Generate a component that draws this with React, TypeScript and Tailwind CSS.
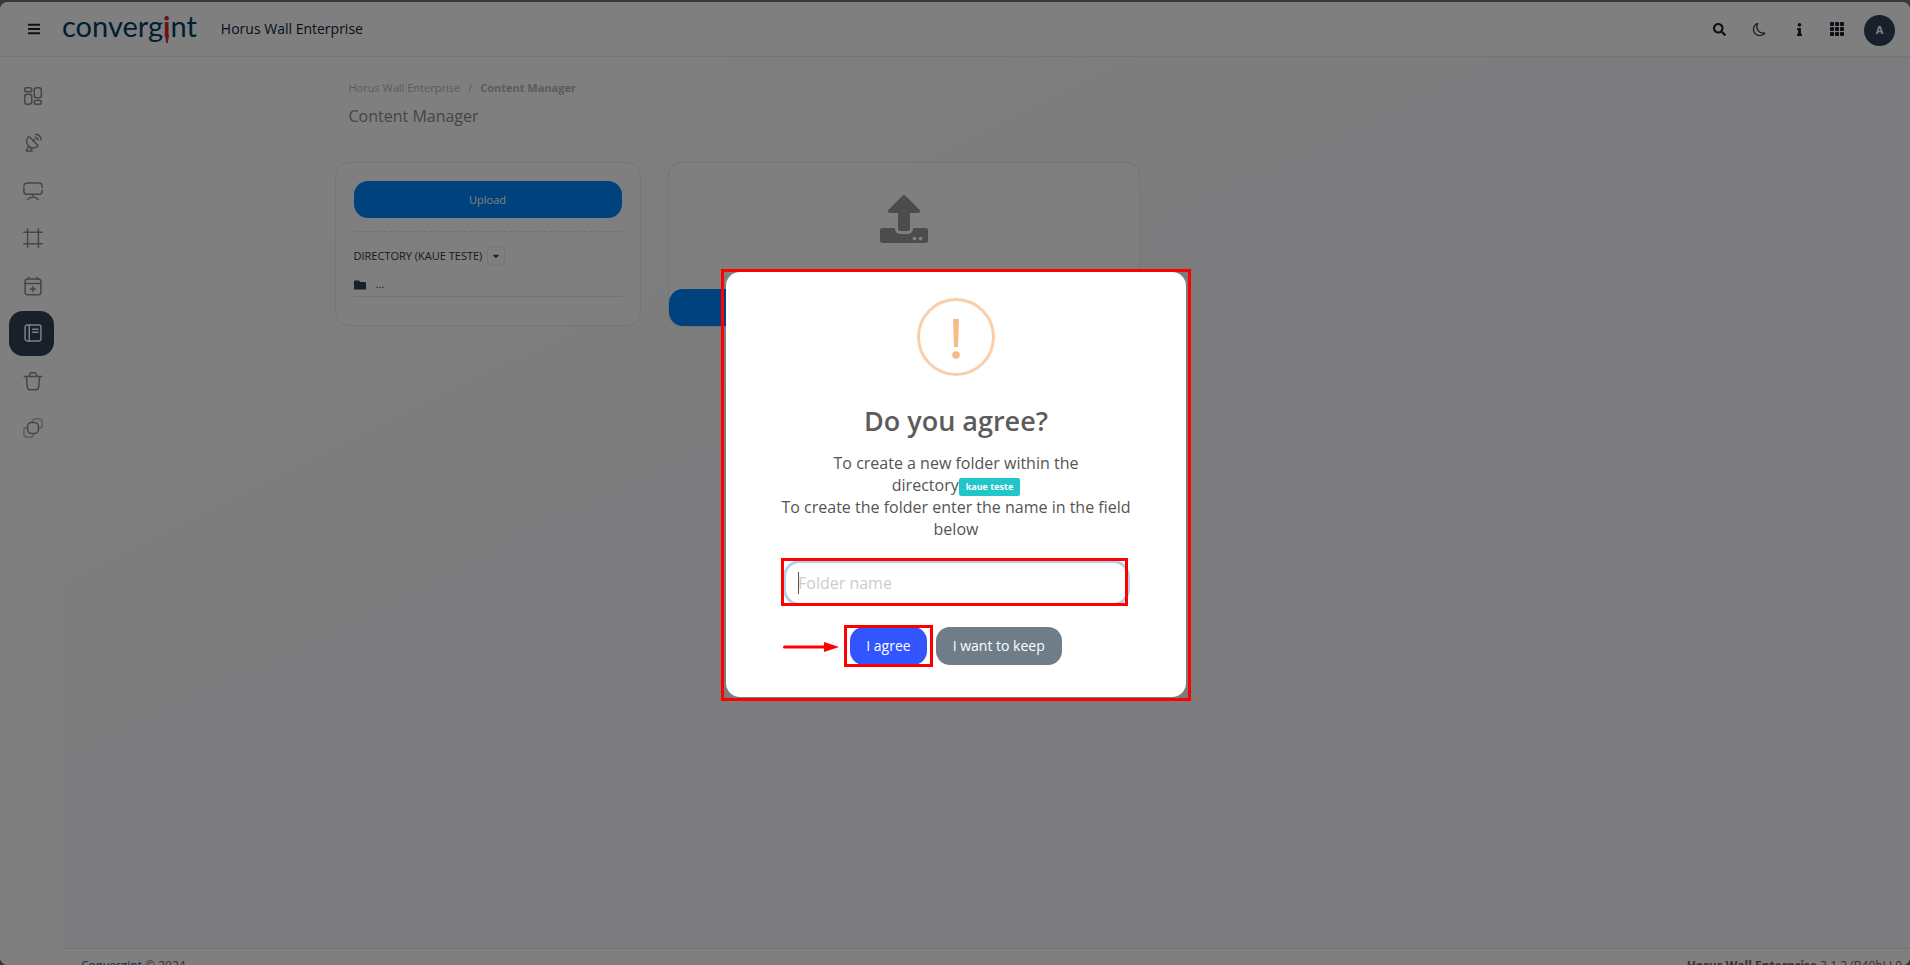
import type { ReactNode } from 'react';
import clsx from 'clsx';
import { FaBars, FaCaretDown, FaFolder, FaInfo, FaSearch, FaUpload } from 'react-icons/fa';
import { BsGrid3X3GapFill, BsMoon } from 'react-icons/bs';

const Icon = ({ children }: { children: ReactNode }) => (
  <svg
    viewBox="0 0 24 24"
    className="w-5 h-5"
    fill="none"
    stroke="currentColor"
    strokeWidth="1.8"
    strokeLinecap="round"
    strokeLinejoin="round"
    aria-hidden="true"
  >
    {children}
  </svg>
);

const navItems = [
  {
    label: 'Dashboard',
    icon: (
      <Icon>
        <rect x="2" y="2" width="8.5" height="5" rx="2.2" />
        <rect x="13.5" y="2" width="8.5" height="12" rx="3" />
        <rect x="2" y="10" width="8.5" height="12" rx="3" />
        <rect x="13.5" y="17" width="8.5" height="5" rx="2.2" />
      </Icon>
    ),
  },
  {
    label: 'Sources',
    icon: (
      <Icon>
        <path d="M6.2 5C3.600 8.100 3.800 12.800 6.700 15.700s7.600 3.100 10.700.5c.7-.6.6-1.200 0-1.800L8 4.900c-.6-.6-1.200-.6-1.800.1Z" />
        <path d="m12 9.500 2-2M6.500 16.500 4 21.500h7l-2-4" />
        <path d="M14.500 5c2 .300 3.300 1.600 3.600 3.600M15 1.500c3.900.400 6.500 3 6.900 6.900" />
      </Icon>
    ),
  },
  {
    label: 'Displays',
    icon: (
      <Icon>
        <path d="M23 11v1c0 3-1 4-4 4H5c-3 0-4-1-4-4V8M1 5.500C1.500 3.500 2.500 2.500 5 2.500h14c3 0 4 1 4 4v1M12 16v3M6 22c1.500-1.800 3.500-2.700 6-2.700s4.500.900 6 2.700" />
      </Icon>
    ),
  },
  {
    label: 'Walls',
    icon: (
      <Icon>
        <path d="M5.500 1v22M18.500 1v22M1 5h22M1 19h22" />
      </Icon>
    ),
  },
  {
    label: 'Schedule',
    icon: (
      <Icon>
        <rect x="2.500" y="3.500" width="19" height="19" rx="3" />
        <path d="M2.500 9h19M7 1.500v2M17 1.500v2M12 12.500v6M9 15.500h6" />
      </Icon>
    ),
  },
  {
    label: 'Content Manager',
    active: true,
    icon: (
      <Icon>
        <rect x="2.500" y="2.500" width="19" height="19" rx="2.500" />
        <path d="M7.500 2.500v19M11.500 7.500h6.500M11.500 11h6.500" />
      </Icon>
    ),
  },
  {
    label: 'Trash',
    icon: (
      <Icon>
        <path d="M1.500 6.500h21M7.500 6l.600-2.500c.300-1 .900-1.500 1.900-1.500h4c1 0 1.600.500 1.900 1.500l.600 2.500M4 6.500l1.200 12.500c.200 2.600 1 3.500 3.200 3.500h7.200c2.200 0 3-.900 3.200-3.500L20 6.500" />
      </Icon>
    ),
  },
  {
    label: 'Copies',
    icon: (
      <Icon>
        <rect x="5.500" y="5.500" width="13" height="13" rx="4.500" />
        <path
          opacity=".6"
          d="M11 5.500c0-3 1.500-4.500 4.500-4.500h3c3 0 4.500 1.500 4.500 4.500v2.500c0 3-1.500 4.500-4.500 4.500M5.500 11C2.500 11 1 12.500 1 15.500v3C1 21.500 2.500 23 5.500 23H8.500c3 0 4.500-1.500 4.500-4.500"
        />
      </Icon>
    ),
  },
];

const Header = () => (
  <header className="flex h-[55px] shrink-0 items-center border-b border-[#eaeaea] bg-white pl-7 pr-[15px] text-[#14202c]">
    <button type="button" aria-label="Toggle menu">
      <FaBars className="w-3 h-3.5" />
    </button>
    <a
      href="#"
      aria-label="convergint"
      className="ml-[22px] -mt-1.5 font-['Lato',sans-serif] text-[29px] leading-8 text-[#003f63]"
    >
      converg
      <span className="relative font-bold text-[#d8232a]">
        i
        <svg viewBox="0 0 4 8" className="absolute left-0.5 top-[27px] h-2 w-1" aria-hidden="true">
          <path d="M0 0h4L2.800 8H1.200Z" fill="currentColor" />
        </svg>
      </span>
      nt
    </a>
    <span className="ml-6 text-sm text-[#0a2138]">Horus Wall Enterprise</span>
    <div className="ml-auto flex items-center">
      <button type="button" aria-label="Search" className="flex w-10 justify-center">
        <FaSearch className="w-[13px] h-[13px]" />
      </button>
      <button type="button" aria-label="Dark mode" className="flex w-10 justify-center">
        <BsMoon className="w-[13px] h-[13px]" strokeWidth="0.4" />
      </button>
      <button type="button" aria-label="Information" className="flex w-10 justify-center">
        <FaInfo className="w-[13px] h-[13px]" />
      </button>
      <button type="button" aria-label="Applications" className="flex w-9 justify-center">
        <BsGrid3X3GapFill className="w-4 h-4" />
      </button>
      <button
        type="button"
        aria-label="Account"
        className="ml-[9px] mt-0.5 h-[31px] w-[31px] rounded-full bg-[#304256] text-[11px] font-bold text-white"
      >
        A
      </button>
    </div>
  </header>
);

const Sidebar = () => (
  <nav className="w-[63px] shrink-0 bg-white pl-[9px] pt-4">
    <ul className="flex h-[378px] flex-col justify-between">
      {navItems.map((item) => (
        <li key={item.label}>
          <a
            href="#"
            aria-label={item.label}
            className={clsx(
              'flex h-[45px] w-[45px] items-center justify-center rounded-[14px] pl-0.5',
              item.active ? 'bg-[#304256] text-white' : 'text-[#8a8a8a]'
            )}
          >
            {item.icon}
          </a>
        </li>
      ))}
    </ul>
  </nav>
);

const DirectoryCard = () => (
  <section className="h-[164px] w-[306px] rounded-[14px] border border-[#e8e8e8] bg-white px-[18px] pt-[18px]">
    <button type="button" className="h-[37px] w-full rounded-[14px] bg-[#0084fc] pt-0.5 text-[11px] text-white">
      Upload
    </button>
    <hr className="mt-[13px] border-dashed border-[#e0e0e0]" />
    <div className="mt-3.5 flex items-center gap-[5px]">
      <h2 className="text-[11px] text-[#333]">DIRECTORY (KAUE TESTE)</h2>
      <button
        type="button"
        aria-label="Directory options"
        className="flex h-5 w-[18px] items-center justify-center rounded border border-[#e8e8e8] text-[#444]"
      >
        <FaCaretDown className="w-2.5 h-2.5" />
      </button>
    </div>
    <a href="#" className="mt-[7px] flex h-6 items-center gap-2.5 border-b border-[#e4e4e4] text-[11px] text-[#444]">
      <FaFolder className="w-3 h-3 text-[#304256]" />
      ...
    </a>
  </section>
);

const UploadCard = () => (
  <section className="flex h-[165px] w-[472px] flex-col justify-between rounded-[14px] border border-[#e8e8e8] bg-white">
    <FaUpload className="mx-auto mt-8 h-12 w-12 text-[#999]" />
    <button type="button" aria-label="Select files" className="h-[37px] w-full rounded-[14px] bg-[#0084fc]" />
  </section>
);

const FolderDialog = () => (
  <div className="fixed inset-0 flex items-center justify-center bg-black/50 pl-0.5 pt-1">
    <div
      role="dialog"
      aria-labelledby="dialog-title"
      className="relative w-[460px] rounded-[14px] bg-white px-[52px] pb-8 pt-[26px] text-center text-[#545454]"
    >
      <div className="pointer-events-none absolute -bottom-1 -left-[5px] -right-[5px] -top-[3px] border-3 border-[#ff0000]" />

      <svg viewBox="0 0 78 78" className="mx-auto h-[78px] w-[78px]" aria-hidden="true">
        <circle cx="39" cy="39" r="37.5" fill="none" stroke="#facea8" strokeWidth="3" />
        <path d="M36 21h6l-1 28h-4Z" fill="#f8bb86" />
        <circle cx="39" cy="57" r="3.8" fill="#f8bb86" />
      </svg>

      <h1 id="dialog-title" className="mt-[27px] text-[27px] font-semibold leading-9 text-[#5c5c5c]">
        Do you agree?
      </h1>

      <p className="mt-[13px] text-base leading-[22px]">
        To create a new folder within the
        <br />
        directory
        <span className="inline-block h-[18px] rounded-xs bg-[#22c6c9] px-[7px] align-bottom text-[9px] font-bold leading-[18px] text-white">
          kaue teste
        </span>
        <br />
        To create the folder enter the name in the field below
      </p>

      <div className="relative ml-2 mr-[7px] mt-[23px]">
        <input
          type="text"
          aria-label="Folder name"
          placeholder="Folder name"
          className="block h-10 w-full rounded-[14px] bg-white px-3 text-base caret-transparent shadow-[0_0_0_3px_#b4d0e7] outline-none placeholder:text-[#ccc]"
        />
        <span className="absolute left-3 top-[9px] h-[22px] w-px bg-[#545454]" />
        <div className="pointer-events-none absolute -left-[5px] -right-px -top-[5px] h-12 border-3 border-[#ff0000]" />
      </div>

      <div className="mt-6 flex justify-center gap-[9px] text-sm text-white">
        <div className="relative">
          <svg viewBox="0 0 56 10" className="absolute -left-[67px] top-[15px] h-2.5 w-14" aria-hidden="true">
            <path d="M1.500 5H42" stroke="#f00" strokeWidth="3" strokeLinecap="round" />
            <path d="M41 0 56 5 41 10Z" fill="#f00" />
          </svg>
          <div className="pointer-events-none absolute -bottom-0.5 -left-1.5 -right-1.5 -top-0.5 border-3 border-[#ff0000]" />
          <button type="button" className="h-[38px] rounded-[14px] bg-[#3355ff] px-4">
            I agree
          </button>
        </div>
        <button type="button" className="h-[38px] rounded-[14px] bg-[#6e7d88] px-[17px]">
          I want to keep
        </button>
      </div>
    </div>
  </div>
);

const App = () => (
  <div className="h-screen overflow-hidden bg-[#707070] pt-0.5 font-['Open_Sans','Noto_Sans',sans-serif]">
    <div className="flex h-full flex-col overflow-hidden rounded-lg bg-white">
      <Header />
      <div className="flex min-h-0 flex-1">
        <Sidebar />
        <div className="flex min-w-0 flex-1 flex-col bg-linear-to-br from-white from-10% to-[#f9f9fc] to-40%">
          <main className="mx-auto w-full max-w-[1320px] flex-1 pl-2 pt-[23px]">
            <div className="pl-3.5">
              <nav aria-label="Breadcrumb" className="flex gap-2 text-[11px] leading-4 text-[#b8b8b8]">
                <a href="#">Horus Wall Enterprise</a>
                <span>/</span>
                <span className="font-bold">Content Manager</span>
              </nav>
              <h1 className="mt-2 text-base leading-6 text-[#8a8a8a]">Content Manager</h1>
            </div>
            <div className="mt-[34px] flex items-start gap-[27px]">
              <DirectoryCard />
              <UploadCard />
            </div>
          </main>
          <footer className="flex h-[17px] shrink-0 justify-between overflow-hidden whitespace-nowrap border-t border-[#e4e4e4] bg-white pl-[18px] pr-2 pt-[9px] text-xs leading-4 text-[#666]">
            <span>
              <a href="#" className="text-[#0a5c9c]">Convergint</a> © 2024
            </span>
            <span>
              <b>Horus Wall Enterprise</b> 3.1.2 (B40bLL0
            </span>
          </footer>
        </div>
      </div>
    </div>
    <FolderDialog />
  </div>
);

export default App;
